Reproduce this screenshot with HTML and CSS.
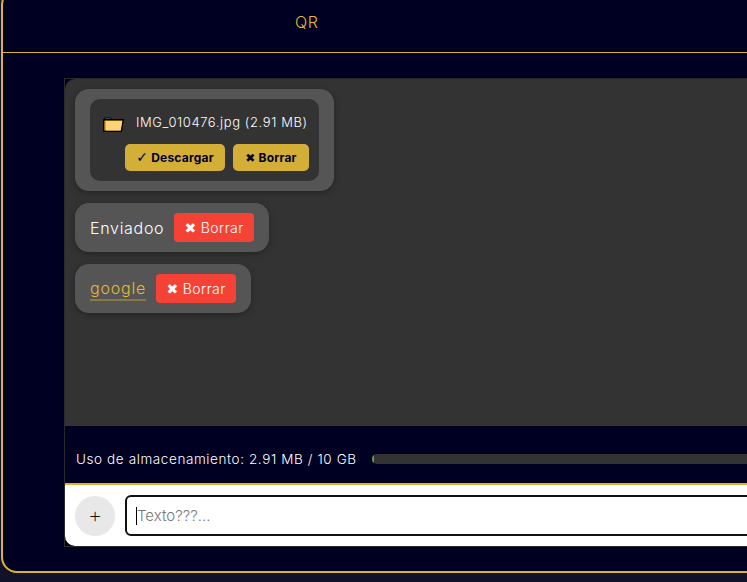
FILE: index.html
```html
<!DOCTYPE html>
<html lang="es">
<head>
<meta charset="utf-8">
<title>Chat</title>
<link rel="stylesheet" href="styles.css">
</head>
<body>
<div class="frame">
  <header class="top"><a class="tab">QR</a></header>
  <main class="chat">
    <div class="chat-inner">
      <section class="messages">
        <div class="bubble file-bubble">
          <div class="file-card">
            <div class="file-row">
              <svg class="folder" viewBox="0 0 21 15" width="21" height="15"><path d="M1.500 2.500V1h6l1 1.500z" fill="#3d9ad9" stroke="#000" stroke-width="1"/><path d="M.7 14.300V2.700h19.600l-2 11.600z" fill="#f5a800" stroke="#000" stroke-width="1.400"/><path d="M3 13.600V4h16.200l-1.600 9.600z" fill="#ffd479"/></svg>
              <span>IMG_010476.jpg (2.91 MB)</span>
            </div>
            <div class="file-actions">
              <button class="gold-btn wide"><span class="sym sym-big">✓</span> Descargar</button>
              <button class="gold-btn narrow"><span class="sym">✖</span> Borrar</button>
            </div>
          </div>
        </div>
        <div class="bubble text-bubble"><span class="msg">Enviadoo</span><button class="red-btn"><span class="sym">✖</span> Borrar</button></div>
        <div class="bubble text-bubble"><a class="link">google</a><button class="red-btn"><span class="sym">✖</span> Borrar</button></div>
      </section>
      <section class="storage">
        <span>Uso de almacenamiento: 2.91 MB / 10 GB</span>
        <div class="track"><div class="fill"></div></div>
      </section>
      <section class="composer">
        <button class="plus">+</button>
        <div class="input"><span class="caret"></span><span class="placeholder">Texto???...</span></div>
      </section>
    </div>
  </main>
</div>
</body>
</html>
```

FILE: styles.css
```css
* { box-sizing: border-box; }
html, body { margin: 0; height: 582px; overflow: hidden; background: #11112a; }
body { font-family: "Inter", "Liberation Sans", sans-serif; font-weight: 300; color: #fff; width: 747px; }
.frame {
  width: 1000px;
  height: 584px;
  margin: -11px 0 0 1px;
  background: #000022;
  border: 2px solid #dab52f;
  border-radius: 16px;
}
.top {
  height: 52px;
  margin-top: 10px;
  border-bottom: 1px solid #dab52f;
  padding: 0 0 0 292px;
  display: flex;
  align-items: center;
}
.tab { color: #e6bc2e; font-size: 16px; letter-spacing: .7px; padding-bottom: 9px; }
.chat {
  width: 900px;
  height: 469px;
  margin: 25px 0 0 61px;
  border: 1px solid #2a2a2a;
}
.chat-inner {
  height: 100%;
  border-radius: 10px 0 0 10px;
  display: flex;
  flex-direction: column;
  overflow: hidden;
}
.messages {
  height: 347px;
  background: #333;
  padding: 10px;
  display: flex;
  flex-direction: column;
  align-items: flex-start;
  gap: 12px;
}
.bubble {
  background: #555;
  border-radius: 14px;
  box-shadow: 0 2px 6px rgba(0,0,0,.3);
}
.file-bubble { padding: 10px 15px; }
.file-card {
  width: 229px;
  height: 82px;
  background: #333;
  border-radius: 10px;
  padding: 13px 10px 0 13px;
}
.file-row { display: flex; align-items: center; gap: 12px; font-size: 13px; letter-spacing: .6px; height: 20px; white-space: nowrap; }
.folder { flex: none; margin-top: 4px; }
.file-actions { display: flex; justify-content: flex-end; gap: 8px; margin-top: 12px; }
.sym { font-family: "DejaVu Sans", sans-serif; font-weight: 700; }
.sym-big { font-size: 14px; line-height: 1; }
.gold-btn {
  height: 27px;
  background: #d4af37;
  color: #000022;
  border: 0;
  border-radius: 5px;
  font: 700 12px "Inter", "Liberation Sans", sans-serif;
  letter-spacing: .2px;
  padding: 0;
}
.wide { width: 100px; }
.narrow { width: 76px; }
.text-bubble { height: 49px; display: flex; align-items: center; gap: 10px; padding: 0 15px; }
.msg { font-size: 16px; letter-spacing: .7px; width: 74px; white-space: nowrap; }
.link { font-size: 16px; letter-spacing: .8px; color: #e6bc2e; width: 56px; border-bottom: 2px solid rgba(212,175,55,.4); padding-bottom: 1px; margin-top: 1px; }
.red-btn {
  width: 80px;
  height: 29px;
  background: #f44336;
  color: #fff;
  border: 0;
  border-radius: 4px;
  font: 300 14px "Inter", "Liberation Sans", sans-serif;
  letter-spacing: .4px;
  padding: 0;
}
.storage {
  height: 57px;
  background: #000022;
  display: flex;
  align-items: center;
  gap: 15px;
  padding: 8px 10px 0 11px;
  font-size: 13.500px;
  letter-spacing: .6px;
  white-space: nowrap;
}
.track { flex: 1; height: 10px; background: #333; border-radius: 5px; overflow: hidden; }
.fill { width: 2px; height: 100%; background: #4caf50; }
.composer {
  flex: 1;
  background: #fff;
  border-top: 2px solid #dab52f;
  display: flex;
  align-items: center;
  gap: 10px;
  padding: 0 10px;
}
.plus {
  width: 40px;
  height: 40px;
  border: 0;
  border-radius: 50%;
  background: #e8e8e8;
  color: #111;
  font: 200 22px/38px "Inter", "Liberation Sans", sans-serif;
  padding: 0 0 2px;
}
.input {
  flex: 1;
  height: 41px;
  border: 2px solid #111;
  border-radius: 6px;
  display: flex;
  align-items: center;
  padding-left: 9px;
  font-size: 15px;
  color: #777;
}
.caret { width: 1px; height: 18px; background: #000; }
```
